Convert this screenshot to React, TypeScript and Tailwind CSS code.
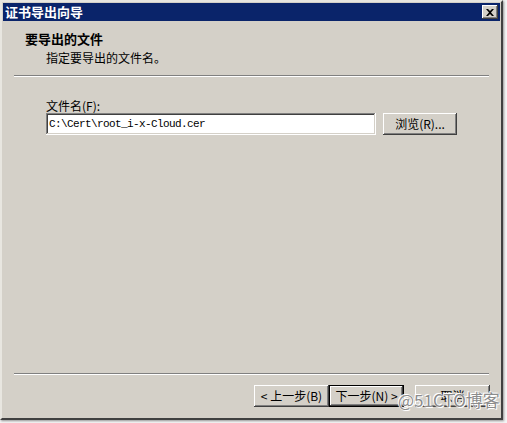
import React from 'react'

const raised = "shadow-[inset_-1px_-1px_#404040,inset_1px_1px_#ffffff,inset_-2px_-2px_#808080,inset_2px_2px_#d4d0c8]"
const sunken = "shadow-[inset_-1px_-1px_#ffffff,inset_1px_1px_#808080,inset_-2px_-2px_#d4d0c8,inset_2px_2px_#404040]"

function Etched() {
    return <div className="mx-[11px] h-[2px] border-t border-t-[#808080] border-b border-b-white" />
}

export default function App() {
    return (
        <div className="relative w-[507px] h-[423px] bg-[#f4f4f4] text-black"
            style={{ fontFamily: '"Noto Sans CJK SC", "Liberation Sans", sans-serif' }}>
            <div className="flex flex-col w-[503px] h-[420px] bg-[#d4d0c8] border-2 border-t-[#e8e6e0] border-l-[#e8e6e0] border-r-[#404040] border-b-[#404040] p-[1px] shadow-[1px_1px_2px_rgba(0,0,0,0.4)]">
                {/* title bar */}
                <div className="flex items-center justify-between h-[18px] bg-[#0a246a] pl-[2px] pr-[2px]">
                    <span className="text-white text-[13px] font-bold leading-[18px]">证书导出向导</span>
                    <button className={`flex items-center justify-center w-[16px] h-[14px] bg-[#d4d0c8] ${raised}`}>
                        <svg width="8" height="7" viewBox="0 0 8 7">
                            <path d="M0 0h2l2 2 2-2h2L5 3.5 8 7H6L4 5 2 7H0l3-3.5z" fill="#000" />
                        </svg>
                    </button>
                </div>

                {/* header */}
                <div className="pl-[22px] pt-[11px]">
                    <div className="text-[13px] font-bold leading-[14px]">要导出的文件</div>
                    <div className="ml-[21px] mt-[5px] text-[12px] leading-[14px]">指定要导出的文件名。</div>
                </div>
                <div className="mt-[10px]"><Etched /></div>

                {/* body */}
                <div className="pl-[43px] pt-[22px]">
                    <div className="text-[12px] leading-[14px]">文件名(F):</div>
                    <div className="flex gap-[7px]">
                        <div className={`w-[330px] h-[22px] bg-white flex items-center pl-[3px] ${sunken}`}>
                            <span className="text-[11px] tracking-[-0.6px]" style={{ fontFamily: '"Liberation Mono", monospace' }}>
                                {"C:\\Cert\\root_i-x-Cloud.cer"}
                            </span>
                        </div>
                        <button className={`w-[74px] h-[22px] bg-[#d4d0c8] text-[12px] ${raised}`}>浏览(R)...</button>
                    </div>
                </div>

                <div className="flex-1" />
                <Etched />

                {/* footer buttons */}
                <div className="flex justify-end mt-[10px] mb-[10px] mr-[10px]">
                    <button className={`w-[75px] h-[22px] bg-[#d4d0c8] text-[12px] ${raised}`}>{"< 上一步(B)"}</button>
                    <button className="w-[75px] h-[22px] border border-black">
                        <div className={`w-full h-full flex items-center justify-center bg-[#d4d0c8] text-[12px] ${raised}`}>{"下一步(N) >"}</div>
                    </button>
                    <button className={`ml-[11px] w-[75px] h-[22px] bg-[#d4d0c8] text-[12px] ${raised}`}>取消</button>
                </div>
            </div>

            {/* watermark */}
            <div className="absolute left-[398px] top-[390px] text-[17px] leading-[20px] text-[#8c8c8c] [text-shadow:0_0_1px_#fff,0_0_2px_#fff,1px_1px_0_#fff,-1px_-1px_0_#fff]">
                @51CTO博客
            </div>
        </div>
    )
}
